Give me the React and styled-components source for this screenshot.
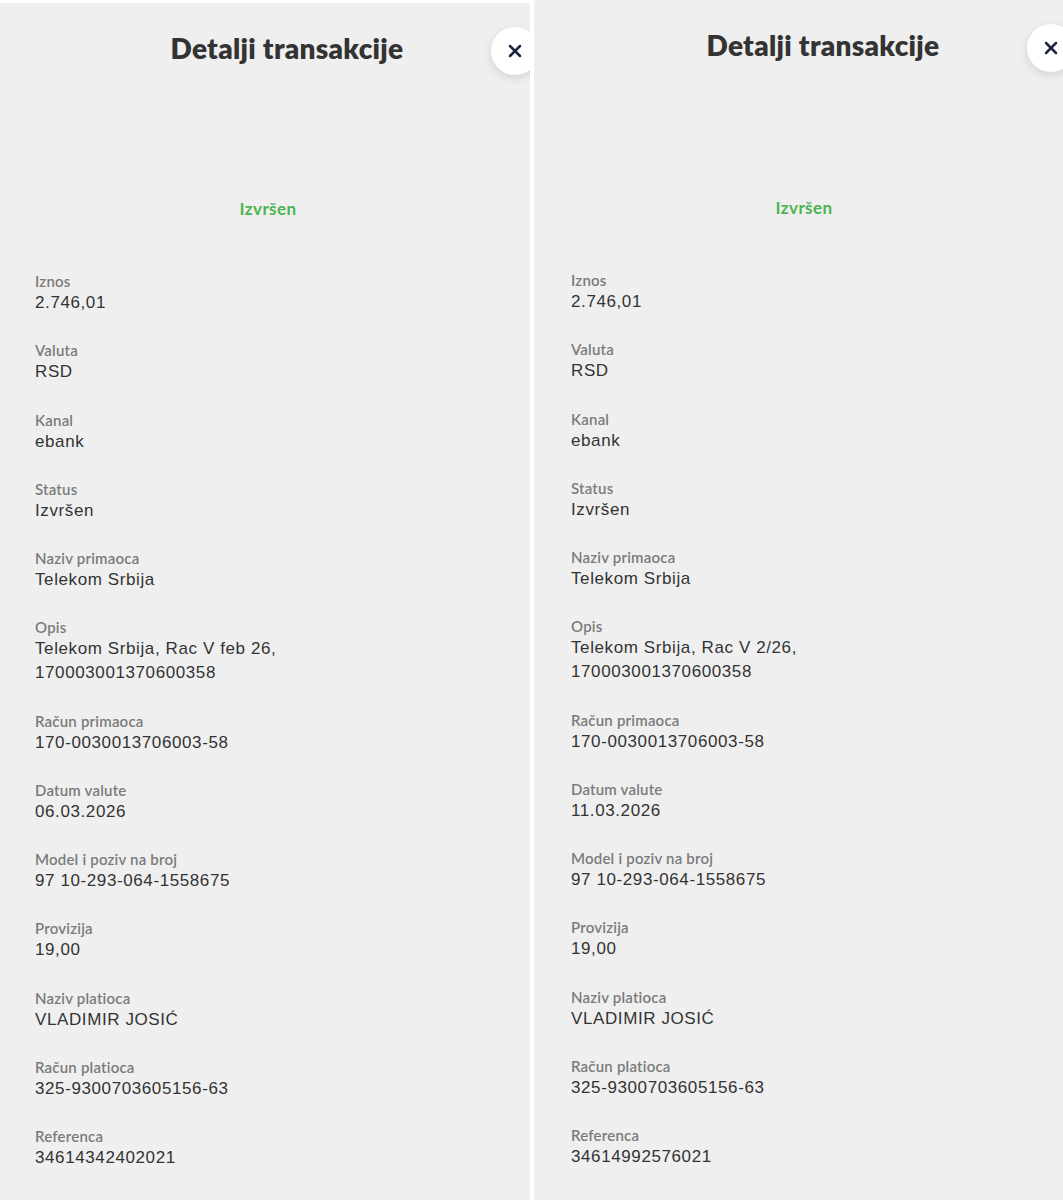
import React from 'react'
import styled, { createGlobalStyle } from 'styled-components'

const GlobalStyle = createGlobalStyle`
  html, body {
    margin: 0;
    padding: 0;
    background: #ffffff;
  }
  body {
    font-family: 'Liberation Sans', Arial, sans-serif;
  }
`

const transactions = [
  {
    id: 'a',
    top: 3,
    width: 530,
    shiftX: -2,
    shiftY: 0,
    status: 'Izvršen',
    fields: [
      ['Iznos', '2.746,01'],
      ['Valuta', 'RSD'],
      ['Kanal', 'ebank'],
      ['Status', 'Izvršen'],
      ['Naziv primaoca', 'Telekom Srbija'],
      ['Opis', 'Telekom Srbija, Rac V feb 26,\n170003001370600358'],
      ['Račun primaoca', '170-0030013706003-58'],
      ['Datum valute', '06.03.2026'],
      ['Model i poziv na broj', '97 10-293-064-1558675'],
      ['Provizija', '19,00'],
      ['Naziv platioca', 'VLADIMIR JOSIĆ'],
      ['Račun platioca', '325-9300703605156-63'],
      ['Referenca', '34614342402021']
    ]
  },
  {
    id: 'b',
    top: 0,
    width: 529,
    shiftX: 0,
    shiftY: 2,
    status: 'Izvršen',
    fields: [
      ['Iznos', '2.746,01'],
      ['Valuta', 'RSD'],
      ['Kanal', 'ebank'],
      ['Status', 'Izvršen'],
      ['Naziv primaoca', 'Telekom Srbija'],
      ['Opis', 'Telekom Srbija, Rac V 2/26,\n170003001370600358'],
      ['Račun primaoca', '170-0030013706003-58'],
      ['Datum valute', '11.03.2026'],
      ['Model i poziv na broj', '97 10-293-064-1558675'],
      ['Provizija', '19,00'],
      ['Naziv platioca', 'VLADIMIR JOSIĆ'],
      ['Račun platioca', '325-9300703605156-63'],
      ['Referenca', '34614992576021']
    ]
  }
]

const CloseIcon = () => (
  <svg width='14' height='14' viewBox='0 0 14 14' fill='none'>
    <path d='M2 2L12 12M12 2L2 12' stroke='#1d2640' strokeWidth='2.5' strokeLinecap='round' />
  </svg>
)

const DetailsSheet = ({ data }) => (
  <Frame $top={data.top} $width={data.width}>
    <Sheet $shift={data.shiftX}>
      <Header>
        <Title>Detalji transakcije</Title>
        <CloseButton aria-label='Zatvori'>
          <CloseIcon />
        </CloseButton>
      </Header>
      <StatusText $shift={data.shiftY}>{data.status}</StatusText>
      <FieldList>
        {data.fields.map(([label, value]) => (
          <Field key={label}>
            <Label>{label}</Label>
            <Value>{value}</Value>
          </Field>
        ))}
      </FieldList>
    </Sheet>
  </Frame>
)

const App = () => (
  <>
    <GlobalStyle />
    <Page>
      {transactions.map((t) => (
        <DetailsSheet key={t.id} data={t} />
      ))}
    </Page>
  </>
)

const Page = styled.div`
  display: flex;
  align-items: flex-start;
  gap: 4px;
  width: 1063px;
  height: 1200px;
  overflow: hidden;
`

const Frame = styled.div`
  flex: none;
  width: ${(p) => p.$width}px;
  height: ${(p) => 1200 - p.$top}px;
  margin-top: ${(p) => p.$top}px;
  background: #efefef;
  overflow: hidden;
`

const Sheet = styled.div`
  width: 540px;
  margin-left: ${(p) => p.$shift}px;
`

const Header = styled.div`
  display: flex;
  align-items: center;
  padding: 24px 0 0 85px;
`

const Title = styled.h2`
  flex: 1;
  margin: -6px 0 0;
  text-align: center;
  font-family: Lato, 'Noto Sans', sans-serif;
  font-weight: 800;
  font-size: 28px;
  letter-spacing: 0.3px;
  color: #333333;
`

const CloseButton = styled.button`
  flex: none;
  display: flex;
  align-items: center;
  justify-content: center;
  width: 48px;
  height: 48px;
  margin-right: -1px;
  padding: 0;
  border: none;
  border-radius: 50%;
  background: #ffffff;
  box-shadow: 0 3px 10px rgba(0, 0, 0, 0.12);
  cursor: pointer;
`

const StatusText = styled.div`
  margin-top: ${(p) => 124 + p.$shift}px;
  padding: 0 37px;
  text-align: center;
  font-family: Lato, 'Noto Sans', sans-serif;
  font-weight: 700;
  font-size: 17px;
  letter-spacing: 0.4px;
  line-height: 20px;
  color: #4cb54f;
`

const FieldList = styled.div`
  display: flex;
  flex-direction: column;
  gap: 25.25px;
  margin-top: 52px;
  padding: 0 37px;
`

const Field = styled.div`
  display: flex;
  flex-direction: column;
`

const Label = styled.span`
  font-family: Lato, 'Noto Sans', sans-serif;
  font-weight: 600;
  font-size: 15px;
  letter-spacing: 0.2px;
  line-height: 20px;
  color: #7b7b7b;
`

const Value = styled.span`
  font-family: 'Liberation Sans', Arial, sans-serif;
  font-size: 17px;
  letter-spacing: 0.6px;
  line-height: 24px;
  color: #333333;
  white-space: pre-line;
`

export default App
